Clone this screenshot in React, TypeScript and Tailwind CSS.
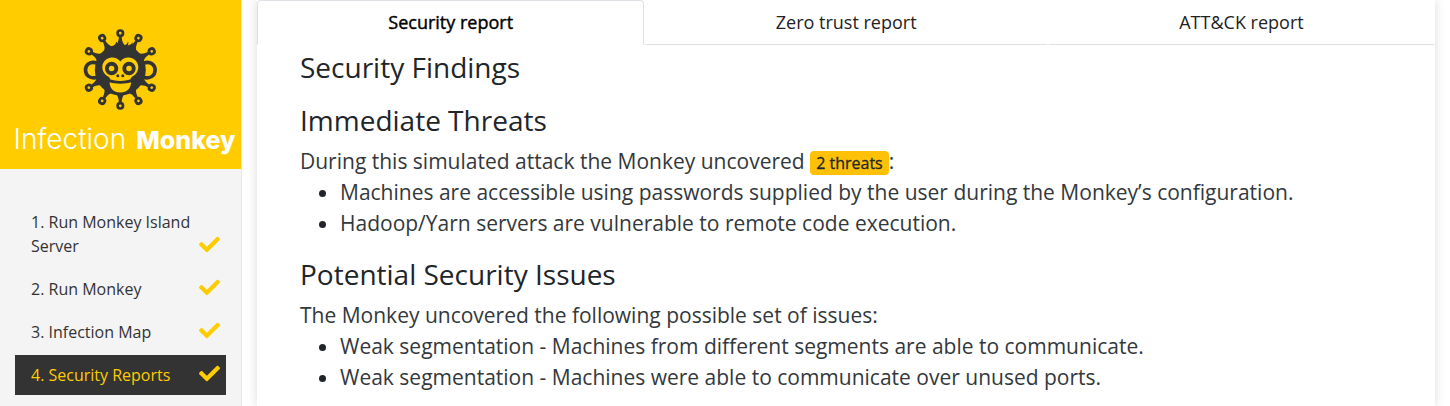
import React from "react";
import { FaCheck } from "react-icons/fa";

const steps = ["1. Run Monkey Island Server", "2. Run Monkey", "3. Infection Map", "4. Security Reports"];

const spikes = [0, 30, 60, 120, 150, 180, 210, 240, 300, 330];

function MonkeyLogo() {
  return (
    <svg viewBox="1 0 90 90" className="size-[90px]" aria-hidden="true">
      <g stroke="#333" fill="none">
        {spikes.map((angle) => (
          <g key={angle} transform={`rotate(${angle} 45.3 47.5)`}>
            <path d="M43.900 14.500h2.800c.2 5 1.500 8 5.400 10.500h-13.600c3.900-2.500 5.200-5.500 5.400-10.500z" fill="#333" stroke="none" />
            <circle cx="45.3" cy="11.200" r="2.700" strokeWidth="2.700" />
          </g>
        ))}
        <path d="M22 41c-7-2-11.500 1.500-11.500 7s4.500 9 11.500 7.500" strokeWidth="3.600" />
        <path d="M68.600 41c7-2 11.500 1.500 11.500 7s-4.500 9-11.500 7.500" strokeWidth="3.600" />
      </g>
      <circle cx="45.3" cy="48" r="25.500" fill="#333" />
      <path fill="#333" d="M34 26c4-1 6.500-3 7.500-6.500 1 1.500 1.200 3 .5 4.500h6.500c2.500-1 3.800-2.500 4.500-4.500.6 1.500.4 2.800-.3 4 2-.4 3.600-1.500 5-3.300.2 2.200-.8 4-2.200 5.800l-6 3H36z" />
      <path
        fill="#fc0"
        d="M45.300 39.500c2.500-3.200 6-4.500 10-3.800 5 .9 8.200 5 8 10-.2 4.500-3.500 7.500-6.500 9.300-1.300 1-1.500 2-.8 4 .5 7-4 11.500-10.700 11.500S34.100 66 34.600 59c.7-2 .5-3-.8-4-3-1.800-6.300-4.800-6.500-9.300-.2-5 3-9.100 8-10 4-.7 7.500.6 10 3.800z"
      />
      <g fill="none" stroke="#333" strokeWidth="3.900">
        <circle cx="36.600" cy="46.500" r="4.700" />
        <circle cx="54" cy="46.500" r="4.700" />
      </g>
      <g fill="#333">
        <circle cx="42.800" cy="53.700" r="1.500" />
        <circle cx="47.800" cy="53.700" r="1.500" />
        <path d="M33 56.500c6.500 3.300 18 3.300 24.600 0l-.6 3.500c-6.500 2.300-17 2.300-23.400 0z" />
      </g>
    </svg>
  );
}

function Sidebar() {
  return (
    <aside className="w-[242px] shrink-0 border-r border-[#e7e7e7] bg-[#f4f4f4]">
      <header className="flex h-[169px] flex-col items-center bg-[#fc0] pt-[22px]">
        <MonkeyLogo />
        <div className="mt-[9px] flex items-baseline gap-[10px] pl-2 font-['Inter'] leading-[36px] text-white">
          <span className="text-[28px] font-light">Infection</span>
          <span className="text-[25px] font-extrabold">Monkey</span>
        </div>
      </header>
      <nav className="mt-[33px] px-[15px]">
        <ul className="flex flex-col gap-[3px]">
          {steps.map((step, i) => (
            <li key={step}>
              <a
                href="#"
                aria-current={i === 3 ? "page" : undefined}
                className={
                  i === 3
                    ? "flex items-end justify-between bg-[#333] py-2 pr-[6px] pl-4 text-[#fc0]"
                    : "flex items-end justify-between py-2 pr-[6px] pl-4 text-[#333]"
                }
              >
                <span className="w-[165px] text-base leading-6">{step}</span>
                <FaCheck className="mb-[3px] size-[21px] shrink-0 text-[#fc0]" />
              </a>
            </li>
          ))}
        </ul>
      </nav>
    </aside>
  );
}

function Tabs() {
  return (
    <div role="tablist" className="flex text-lg leading-[27px] text-[#222]">
      <button role="tab" aria-selected="true" className="flex-auto rounded-t border border-b-transparent border-[#dee2e6] px-4 py-2 text-black [-webkit-text-stroke:0.4px_black]">
        Security report
      </button>
      <button role="tab" aria-selected="false" className="flex-auto border border-transparent border-b-[#dee2e6] px-4 py-2">
        Zero trust report
      </button>
      <button role="tab" aria-selected="false" className="flex-auto border border-transparent border-b-[#dee2e6] px-4 py-2">
        ATT&amp;CK report
      </button>
    </div>
  );
}

export default function App() {
  return (
    <div className="flex min-h-screen bg-white font-['Open_Sans',sans-serif] text-[#212529]">
      <Sidebar />
      <main className="mr-[15px] ml-[15px] min-w-0 flex-1 bg-white shadow-[0_0_10px_rgba(0,0,0,0.15)]">
        <Tabs />
        <article className="px-[43px] pt-[5px] text-[21px] leading-[31px] text-[#33383c]">
          <h2 className="mb-[19px] text-[28px] leading-[34px] text-[#212529]">Security Findings</h2>
          <section className="mb-[18px]">
            <h3 className="mb-[9px] text-[28px] leading-[34px] text-[#212529]">Immediate Threats</h3>
            <p>
              During this simulated attack the Monkey uncovered{" "}
              <span className="inline-block rounded bg-[#ffc107] px-[6px] py-1 align-baseline text-base leading-4 text-[#212529] [-webkit-text-stroke:0.3px_#212529]">2 threats</span>:
            </p>
            <ul className="list-disc pl-10 marker:text-[#212529]">
              <li>Machines are accessible using passwords supplied by the user during the Monkey’s configuration.</li>
              <li>Hadoop/Yarn servers are vulnerable to remote code execution.</li>
            </ul>
          </section>
          <section>
            <h3 className="mb-[9px] text-[28px] leading-[34px] text-[#212529]">Potential Security Issues</h3>
            <p>The Monkey uncovered the following possible set of issues:</p>
            <ul className="list-disc pl-10 marker:text-[#212529]">
              <li>Weak segmentation - Machines from different segments are able to communicate.</li>
              <li>Weak segmentation - Machines were able to communicate over unused ports.</li>
            </ul>
          </section>
        </article>
      </main>
    </div>
  );
}
